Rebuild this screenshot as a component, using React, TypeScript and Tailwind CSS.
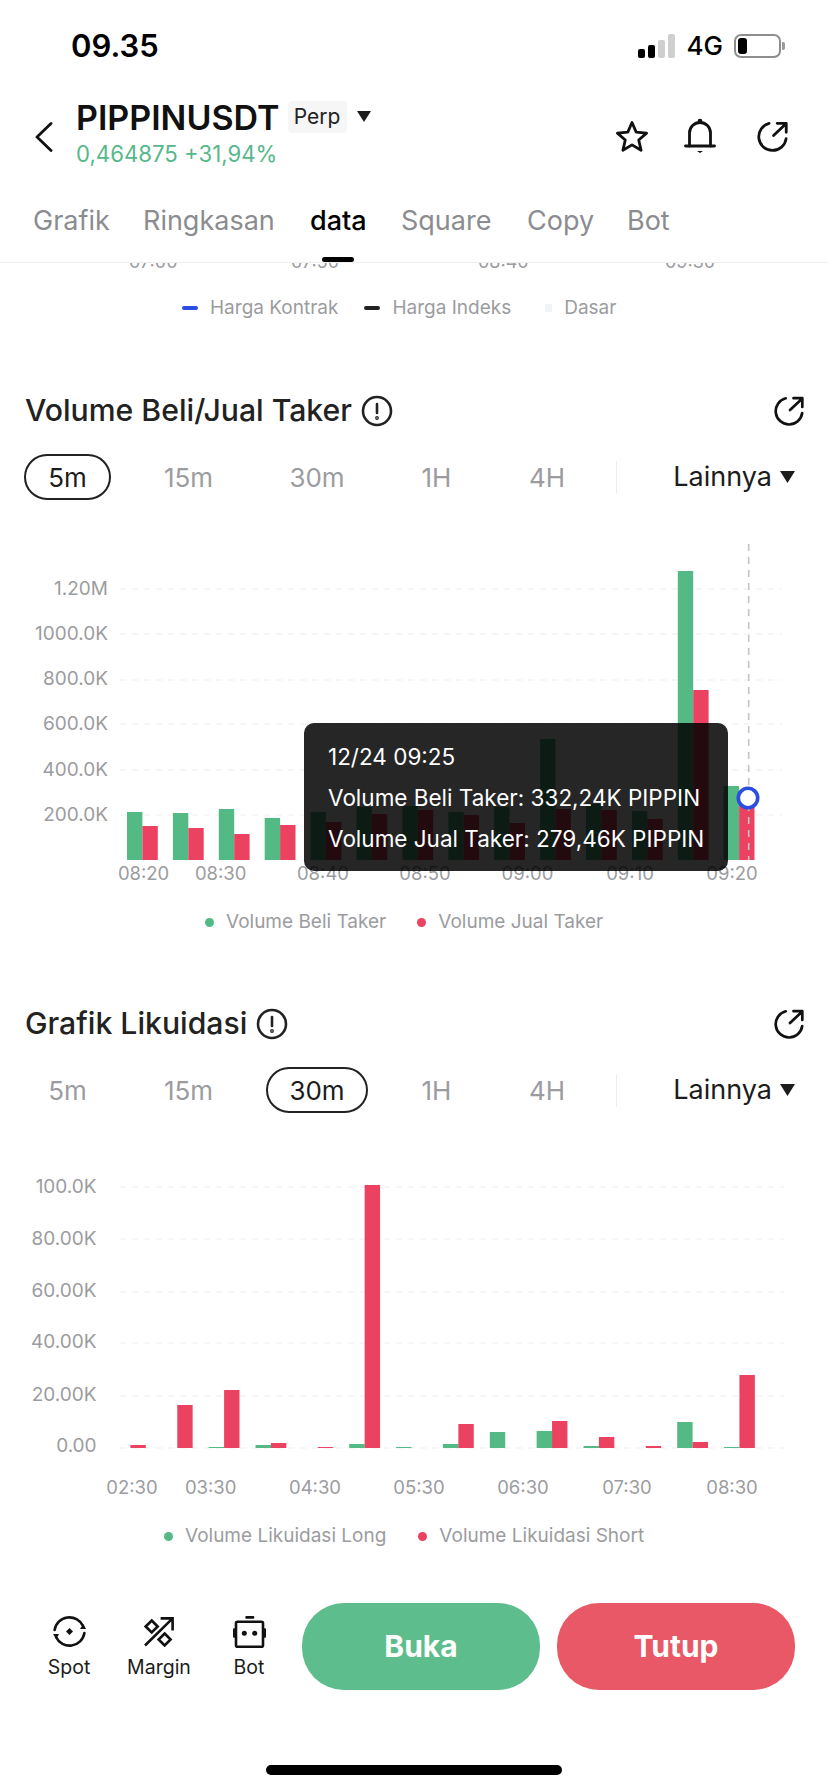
import React from "react";

const FONT = "font-['Inter','Noto_Sans',sans-serif]";
const GREEN = "#53b985";
const RED = "#ea4260";

// [green, red] bar heights in px
const takerBars = [
  [48, 34], [47, 32], [51, 26], [42, 35], [48, 38], [53, 46], [54, 50],
  [48, 45], [53, 37], [121, 51], [56, 50], [49, 41], [289, 170], [74, 62],
];
const liqBars = [
  [0, 3], [0, 43], [1, 58], [3, 5], [0, 1], [4, 263], [1, 0],
  [4, 24], [16, 0], [17, 27], [2, 11], [0, 2], [26, 6], [1, 73],
];

const ShareIcon = ({ size = 30 }: { size?: number }) => (
  <svg width={size} height={size} viewBox="0 0 30 30" fill="none" stroke="#111" strokeWidth="2.7" strokeLinecap="round" strokeLinejoin="round">
    <path d="M11.7 2.3A13.3 13.3 0 1 0 28.2 17" />
    <path d="M16 14 28 2.7M19.5 2.2h8.8V11" />
  </svg>
);

const InfoIcon = () => (
  <svg width="32" height="32" viewBox="0 0 32 32" fill="none" stroke="#222" strokeWidth="2.6" strokeLinecap="round">
    <circle cx="16" cy="16" r="14" />
    <path d="M16 9v9" />
    <circle cx="16" cy="23" r="0.6" fill="#222" />
  </svg>
);

const Triangle = ({ w, h }: { w: number; h: number }) => (
  <svg width={w} height={h} viewBox="0 0 14 11" className="shrink-0">
    <path d="M0 0h14L7 11z" fill="#1c1c1c" />
  </svg>
);

const LegendItem = ({ color, label }: { color: string; label: string }) => (
  <div className="flex items-center">
    <span className="w-[9px] h-[9px] rounded-full" style={{ background: color }} />
    <span className="ml-[12px] text-[19px] text-[#9b9ca0] leading-6">{label}</span>
  </div>
);

const Tabs = ({ active }: { active: string }) => {
  const cells = [
    ["5m", "w-[87px]"],
    ["15m", "w-[155px]"],
    ["30m", "w-[102px]"],
    ["1H", "w-[137px]"],
    ["4H", "w-[84px]"],
  ];
  return (
    <div className="flex items-center h-[46px] mt-[27px] pl-[24px] pr-[33px]">
      {cells.map(([t, w]) => (
        <div
          key={t}
          className={`${w} h-[46px] flex items-center justify-center rounded-[23px] text-[26px] ${
            t === active ? "border-2 border-[#222] text-[#1c1c1c]" : "text-[#9b9ca0]"
          }`}
        >
          {t}
        </div>
      ))}
      <div className="ml-[27px] w-px h-[33px] bg-[#eeeeee]" />
      <div className="ml-auto flex items-center gap-[8px] text-[27px] text-[#1c1c1c]">
        Lainnya
        <Triangle w={15} h={12} />
      </div>
    </div>
  );
};

const SectionHead = ({ title }: { title: string }) => (
  <div className="flex items-center h-[32px] pl-[25px] pr-[24px]">
    <span className="text-[30.2px] font-medium text-[#222] whitespace-nowrap">{title}</span>
    <span className="ml-[9px]">
      <InfoIcon />
    </span>
    <span className="ml-auto">
      <ShareIcon />
    </span>
  </div>
);

const Grid = ({ ys, x2 }: { ys: number[]; x2: number }) => (
  <>
    {ys.map((y) => (
      <line key={y} x1="120" x2={x2} y1={y} y2={y} stroke="#f3f3f3" strokeWidth="1.5" strokeDasharray="6 6" />
    ))}
  </>
);

const Bars = ({ data, x0, step, base }: { data: number[][]; x0: number; step: number; base: number }) => (
  <>
    {data.map(([g, r], i) => (
      <g key={i}>
        <rect x={x0 + step * i} y={base - g} width="15.4" height={g} fill={GREEN} />
        <rect x={x0 + step * i + 15.4} y={base - r} width="15.4" height={r} fill={RED} />
      </g>
    ))}
  </>
);

const TakerChart = () => {
  const yLabels: [string, number][] = [
    ["1.20M", 590], ["1000.0K", 635], ["800.0K", 680], ["600.0K", 725], ["400.0K", 771], ["200.0K", 816],
  ];
  const xLabels: [string, number][] = [
    ["08:20", 143.6], ["08:30", 220.7], ["08:40", 323], ["08:50", 425], ["09:00", 527.5], ["09:10", 630], ["09:20", 732],
  ];
  return (
    <div className="relative mt-[39px] h-[350px]">
      <svg width="828" height="350" viewBox="0 540 828 350" className="block">
        <Grid ys={[590, 635, 681, 725, 771, 816]} x2={782} />
        <Bars data={takerBars} x0={127} step={45.9} base={861} />
        {yLabels.map(([t, y]) => (
          <text key={t} x="108" y={y + 6} textAnchor="end" fontSize="19" fill="#9b9ca0" fontFamily="Inter">{t}</text>
        ))}
        {xLabels.map(([t, x]) => (
          <text key={t} x={x} y="881" textAnchor="middle" fontSize="18.5" fill="#9b9ca0" fontFamily="Inter">{t}</text>
        ))}
        <line x1="748.7" x2="748.7" y1="545" y2="861" stroke="#c4c4c6" strokeWidth="1.6" strokeDasharray="7 6" />
        <circle cx="748" cy="799" r="9.7" fill="#fff" stroke="#2b4ee0" strokeWidth="3.6" />
      </svg>
      {/* tooltip */}
      <div className="absolute left-[304px] top-[184px] w-[424px] h-[148px] rounded-[10px] bg-black/85 text-white text-[22.5px] pl-[24px] pt-[2px] flex flex-col justify-center gap-[13px] whitespace-nowrap">
        <div className="leading-[28px]">12/24 09:25</div>
        <div className="leading-[28px]">Volume Beli Taker: 332,24K PIPPIN</div>
        <div className="leading-[28px]">Volume Jual Taker: 279,46K PIPPIN</div>
      </div>
    </div>
  );
};

const LiquidationChart = () => {
  const yLabels: [string, number][] = [
    ["100.0K", 1188], ["80.00K", 1240], ["60.00K", 1292], ["40.00K", 1343], ["20.00K", 1396], ["0.00", 1447],
  ];
  const xLabels: [string, number][] = [
    ["02:30", 132], ["03:30", 210.7], ["04:30", 315], ["05:30", 419], ["06:30", 523], ["07:30", 627], ["08:30", 732],
  ];
  return (
    <svg width="828" height="355" viewBox="0 1150 828 355" className="block mt-[36px]">
      <Grid ys={[1188, 1240, 1293, 1344, 1397, 1449]} x2={784} />
      <Bars data={liqBars} x0={115} step={46.85} base={1449} />
      {yLabels.map(([t, y]) => (
        <text key={t} x="96.6" y={y + 6} textAnchor="end" fontSize="19" fill="#9b9ca0" fontFamily="Inter">{t}</text>
      ))}
      {xLabels.map(([t, x]) => (
        <text key={t} x={x} y="1495" textAnchor="middle" fontSize="18.5" fill="#9b9ca0" fontFamily="Inter">{t}</text>
      ))}
    </svg>
  );
};

const SpotIcon = () => (
  <svg width="33" height="33" viewBox="0 0 33 33" fill="none" stroke="#111" strokeWidth="2.6" strokeLinecap="round">
    <path d="M1.6 15A15 15 0 0 1 30 11" />
    <path d="M31.4 18A15 15 0 0 1 3 22" />
    <path d="M27 14h6l-2.6-5z" fill="#111" stroke="none" />
    <path d="M0 19h6l-2.6 5z" fill="#111" stroke="none" />
    <path d="M16.5 13l3.5 3.5-3.5 3.5-3.5-3.5z" fill="#111" stroke="none" />
  </svg>
);

const MarginIcon = () => (
  <svg width="30" height="30" viewBox="0 0 30 30" fill="none" stroke="#111" strokeWidth="2.6">
    <path d="M1 28.5 28.6 1.4M16.6 1.4h12v12" />
    <path d="M7.7 3.5l6 6-6 6-6-6z" />
    <path d="M20.6 16.5l6 6-6 6-6-6z" />
  </svg>
);

const BotIcon = () => (
  <svg width="33" height="32" viewBox="0 0 33 32" fill="none">
    <rect x="3" y="5.7" width="27" height="25" rx="1.5" stroke="#111" strokeWidth="2.6" />
    <rect x="0" y="12.3" width="2.6" height="9.4" rx="1" fill="#111" />
    <rect x="30.4" y="12.3" width="2.6" height="9.4" rx="1" fill="#111" />
    <rect x="12.3" y="0" width="9" height="2.8" rx="1" fill="#111" />
    <circle cx="11.3" cy="17.3" r="2.5" fill="#111" />
    <circle cx="21.7" cy="17.3" r="2.5" fill="#111" />
  </svg>
);

const NavItem = ({ icon, label, w }: { icon: React.ReactNode; label: string; w: string }) => (
  <div className={`${w} flex flex-col items-center`}>
    <div className="h-[34px] flex items-center justify-center">{icon}</div>
    <div className="mt-[6px] text-[19.5px] leading-6 text-[#1c1c1c]">{label}</div>
  </div>
);

export default function App() {
  return (
    <div className={`${FONT} w-[828px] h-[1792px] bg-white overflow-hidden flex flex-col`}>
      {/* status bar */}
      <div className="h-[92px] flex items-center pl-[71px] pr-[43px]">
        <span className="text-[31px] font-semibold text-black">09.35</span>
        <div className="ml-auto flex items-center">
          <div className="flex items-end gap-[3.5px] h-[24px]">
            <span className="w-[6.5px] h-[9px] rounded-[2px] bg-black" />
            <span className="w-[6.5px] h-[13px] rounded-[2px] bg-black" />
            <span className="w-[6.5px] h-[18px] rounded-[2px] bg-[#cfcfcf]" />
            <span className="w-[6.5px] h-[24px] rounded-[2px] bg-[#cfcfcf]" />
          </div>
          <span className="ml-[12px] text-[26px] font-medium text-black leading-none">4G</span>
          <div className="ml-[11px] w-[47px] h-[24px] rounded-[7px] border-2 border-[#8e8e8e] p-[2px]">
            <div className="w-[9px] h-full rounded-[3px] bg-black" />
          </div>
          <div className="ml-[1px] w-[3px] h-[8px] rounded-r-[2px] bg-[#9a9a9a]" />
        </div>
      </div>

      {/* header */}
      <div className="h-[88px] flex items-start pl-[35px] pr-[40px]">
        <svg width="18" height="30" viewBox="0 0 18 30" fill="none" stroke="#111" strokeWidth="2.8" strokeLinecap="round" strokeLinejoin="round" className="mt-[30px]">
          <path d="M16 1.5 2 15l14 13.5" />
        </svg>
        <div className="ml-[23px] pt-[8px]">
          <div className="flex items-center h-[34px]">
            <span className="text-[34px] font-semibold text-[#111] whitespace-nowrap">PIPPINUSDT</span>
            <span className="ml-[8px] h-[32px] w-[59px] flex items-center justify-center rounded-[4px] bg-[#f6f6f6] text-[21px] text-[#222]">Perp</span>
            <span className="ml-[10px] -mt-[1px]">
              <Triangle w={14} h={11} />
            </span>
          </div>
          <div className="mt-[6px] h-[28px] flex items-center text-[22.2px] text-[#55b88a] whitespace-nowrap">
            0,464875 +31,94%
          </div>
        </div>
        <div className="ml-auto flex items-center mt-[26px]">
          <svg width="34" height="33" viewBox="0 0 34 33" fill="none" stroke="#111" strokeWidth="2.8" strokeLinejoin="round">
            <path d="M17 2.5l4.2 9.6 10.4 1-7.9 6.9 2.4 10.3-9.1-5.4-9.1 5.4 2.4-10.3-7.9-6.9 10.4-1z" />
          </svg>
          <svg width="32" height="36" viewBox="0 0 32 36" fill="none" stroke="#111" strokeWidth="2.8" strokeLinecap="round" className="ml-[35px]">
            <path d="M5.5 28V15a10.5 10.5 0 0 1 21 0v13" />
            <path d="M1.5 28h29" />
            <circle cx="16" cy="3.2" r="1" fill="#111" />
            <path d="M13 33h6l-3 2z" fill="#111" stroke="none" />
          </svg>
          <span className="ml-[41px]">
            <ShareIcon size={31} />
          </span>
        </div>
      </div>

      {/* tabs */}
      <div className="relative h-[83px] border-b border-[#eeeeee] text-[27px] text-[#8b8c90] whitespace-nowrap">
        <div className="flex items-center h-[82px] pl-[33px]">
          <span className="w-[110px]">Grafik</span>
          <span className="w-[167px]">Ringkasan</span>
          <span className="w-[91px] font-medium text-black">data</span>
          <span className="w-[126px]">Square</span>
          <span className="w-[100px]">Copy</span>
          <span>Bot</span>
        </div>
        <div className="absolute left-[322px] bottom-0 w-[32px] h-[5px] rounded-[3px] bg-black" />
      </div>

      {/* sliced axis labels from the chart scrolled under the tabs */}
      <div className="h-[6px] overflow-hidden text-[18px] leading-[24px] text-[#9b9ca0]">
        <div className="flex -mt-[13px] h-[24px] pl-[129px]">
          <span className="w-[162px]">07:00</span>
          <span className="w-[187px]">07:50</span>
          <span className="w-[187px]">08:40</span>
          <span>09:30</span>
        </div>
      </div>

      {/* funding legend */}
      <div className="mt-[27px] h-[24px] flex items-center pl-[182px] text-[19px] text-[#9b9ca0]">
        <span className="w-[16px] h-[4px] rounded-full bg-[#2b4ee0]" />
        <span className="ml-[12px]">Harga Kontrak</span>
        <span className="ml-[26px] w-[16px] h-[4px] rounded-full bg-[#222]" />
        <span className="ml-[12px]">Harga Indeks</span>
        <span className="ml-[34px] w-[7px] h-[8px] bg-[#f0f3fa]" />
        <span className="ml-[12px]">Dasar</span>
      </div>

      {/* taker volume */}
      <div className="mt-[75px]">
        <SectionHead title="Volume Beli/Jual Taker" />
        <Tabs active="5m" />
        <TakerChart />
        <div className="mt-[21px] flex items-center pl-[205px] gap-[31px]">
          <LegendItem color={GREEN} label="Volume Beli Taker" />
          <LegendItem color={RED} label="Volume Jual Taker" />
        </div>
      </div>

      {/* liquidation */}
      <div className="mt-[74px]">
        <SectionHead title="Grafik Likuidasi" />
        <Tabs active="30m" />
        <LiquidationChart />
        <div className="mt-[20px] flex items-center pl-[164px] gap-[32px]">
          <LegendItem color={GREEN} label="Volume Likuidasi Long" />
          <LegendItem color={RED} label="Volume Likuidasi Short" />
        </div>
      </div>

      {/* bottom actions */}
      <div className="mt-[55px] flex items-center h-[87px] pl-[24px] pr-[33px]">
        <NavItem icon={<SpotIcon />} label="Spot" w="w-[90px]" />
        <NavItem icon={<MarginIcon />} label="Margin" w="w-[90px]" />
        <NavItem icon={<BotIcon />} label="Bot" w="w-[90px]" />
        <div className="ml-[8px] w-[238px] h-[87px] rounded-[42px] bg-[#5dbd8c] flex items-center justify-center text-[30px] font-bold text-white">Buka</div>
        <div className="ml-[17px] w-[238px] h-[87px] rounded-[42px] bg-[#e85866] flex items-center justify-center text-[30px] font-bold text-white">Tutup</div>
      </div>

      {/* home indicator */}
      <div className="mt-[75px] mx-auto w-[296px] h-[10px] rounded-full bg-black" />
    </div>
  );
}
